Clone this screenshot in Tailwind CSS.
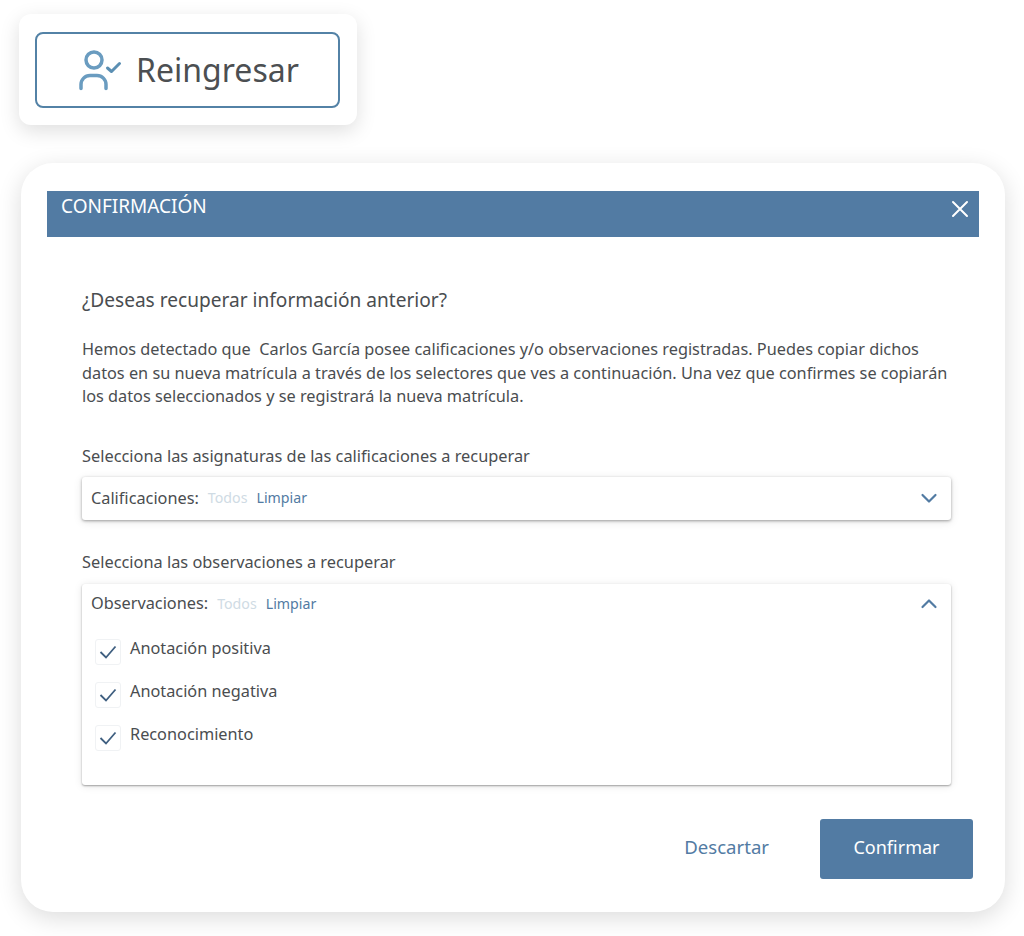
<!doctype html>
<html lang="es"><head><meta charset="utf-8"><script src="https://cdn.jsdelivr.net/npm/@tailwindcss/browser@4"></script></head>
<body class="bg-white font-['Noto_Sans',sans-serif] text-[#4a4d50] w-[1024px] h-[936px] overflow-hidden">
<div class="pt-[14px] pl-[19px]">
  <div class="w-[338px] h-[111px] bg-white rounded-[12px] shadow-[0_6px_20px_rgba(0,0,0,0.13)] pt-[18px] pl-[16px]">
    <button class="w-[305px] h-[76px] border-2 border-[#5382a6] rounded-[8px] flex items-center justify-center gap-[13px] pl-[3px] bg-white">
      <svg class="w-[44px] h-[42px]" viewBox="0 0 44 42" fill="none" stroke="#6a9cc0" stroke-width="3.500" stroke-linecap="round" stroke-linejoin="round"><circle cx="15" cy="11" r="8"/><path d="M2 39.500v-4a9 9 0 0 1 9-9h7a9 9 0 0 1 9 9v4"/><path d="M28.500 19l4 3.500 8-8" stroke="#5b8fb3" stroke-width="3"/></svg>
      <span class="text-[32px] leading-none text-[#4c4f52]">Reingresar</span>
    </button>
  </div>
  <div class="mt-[38px] ml-[2px] w-[984px] h-[749px] bg-white rounded-[32px] shadow-[0_6px_24px_rgba(0,0,0,0.14)] pt-[28px] px-[26px]">
    <div class="h-[46px] bg-[#527ba3] flex justify-between pl-[14px] pr-[10px] pt-[3px] text-white">
      <span class="text-[19px] leading-[24px]">CONFIRMACIÓN</span>
      <svg class="w-[18px] h-[18px] mt-[6px]" viewBox="0 0 18 18" stroke="white" stroke-width="2" stroke-linecap="round"><path d="M2 2l14 14M16 2L2 16"/></svg>
    </div>
    <div class="pl-[35px] pr-[28px]">
      <h2 class="mt-[50px] text-[19.100px] leading-[26px] font-normal">¿Deseas recuperar información anterior?</h2>
      <p class="mt-[25px] text-[16.300px] leading-[23.500px] whitespace-nowrap">Hemos detectado que &nbsp;Carlos García posee calificaciones y/o observaciones registradas. Puedes copiar dichos<br>datos en su nueva matrícula a través de los selectores que ves a continuación. Una vez que confirmes se copiarán<br>los datos seleccionados y se registrará la nueva matrícula.</p>
      <p class="mt-[35px] text-[16.350px] leading-[24px]">Selecciona las asignaturas de las calificaciones a recuperar</p>
      <div class="mt-[9px] h-[43px] bg-white rounded-[3px] shadow-[0_1px_3px_rgba(0,0,0,0.35),0_2px_10px_rgba(0,0,0,0.1)] flex items-center justify-between pl-[9px] pr-[13px] text-[16.300px]">
        <div class="flex gap-[9px] items-center"><span>Calificaciones:</span><span class="text-[14.200px] text-[#cfdbe4]">Todos</span><span class="text-[14.200px] text-[#527ba3]">Limpiar</span></div>
        <svg class="w-[18px] h-[11px]" viewBox="0 0 18 11" fill="none" stroke="#527ba3" stroke-width="2.200" stroke-linecap="round" stroke-linejoin="round"><path d="M2.500 2l6.500 6.500L15.500 2"/></svg>
      </div>
      <p class="mt-[30px] text-[16.350px] leading-[24px]">Selecciona las observaciones a recuperar</p>
      <div class="mt-[10px] h-[201px] bg-white rounded-[3px] shadow-[0_1px_2px_rgba(0,0,0,0.35),0_1px_8px_rgba(0,0,0,0.1)] pl-[9px] pr-[13px] text-[16.300px]">
        <div class="h-[40px] flex items-center justify-between">
          <div class="flex gap-[9px] items-center"><span>Observaciones:</span><span class="text-[14.200px] text-[#cfdbe4]">Todos</span><span class="text-[14.200px] text-[#527ba3]">Limpiar</span></div>
          <svg class="w-[18px] h-[11px]" viewBox="0 0 18 11" fill="none" stroke="#527ba3" stroke-width="2.200" stroke-linecap="round" stroke-linejoin="round"><path d="M2.500 9L9 2.500 15.500 9"/></svg>
        </div>
        <ul class="pl-[4px] pt-[15px] flex flex-col gap-[17px]">
          <li class="flex gap-[9px] h-[26px]"><span class="w-[26px] h-[26px] rounded-[3px] border border-[#f0f2f4] flex items-center justify-center"><svg class="w-[18px] h-[14px]" viewBox="0 0 18 14" fill="none" stroke="#3f5f80" stroke-width="1.800"><path d="M1.500 7l5.500 5.500L16.500 1.500"/></svg></span><span class="leading-[19px]">Anotación positiva</span></li>
          <li class="flex gap-[9px] h-[26px]"><span class="w-[26px] h-[26px] rounded-[3px] border border-[#f0f2f4] flex items-center justify-center"><svg class="w-[18px] h-[14px]" viewBox="0 0 18 14" fill="none" stroke="#3f5f80" stroke-width="1.800"><path d="M1.500 7l5.500 5.500L16.500 1.500"/></svg></span><span class="leading-[19px]">Anotación negativa</span></li>
          <li class="flex gap-[9px] h-[26px]"><span class="w-[26px] h-[26px] rounded-[3px] border border-[#f0f2f4] flex items-center justify-center"><svg class="w-[18px] h-[14px]" viewBox="0 0 18 14" fill="none" stroke="#3f5f80" stroke-width="1.800"><path d="M1.500 7l5.500 5.500L16.500 1.500"/></svg></span><span class="leading-[19px]">Reconocimiento</span></li>
        </ul>
      </div>
      <div class="mt-[34px] flex justify-end items-center -mr-[22px]">
        <button class="text-[18.600px] text-[#527ba3] mr-[51px] pb-[4px]">Descartar</button>
        <button class="w-[153px] h-[60px] rounded-[3px] bg-[#527ba3] text-white text-[18px] pb-[3px]">Confirmar</button>
      </div>
    </div>
  </div>
</div>
</body></html>
